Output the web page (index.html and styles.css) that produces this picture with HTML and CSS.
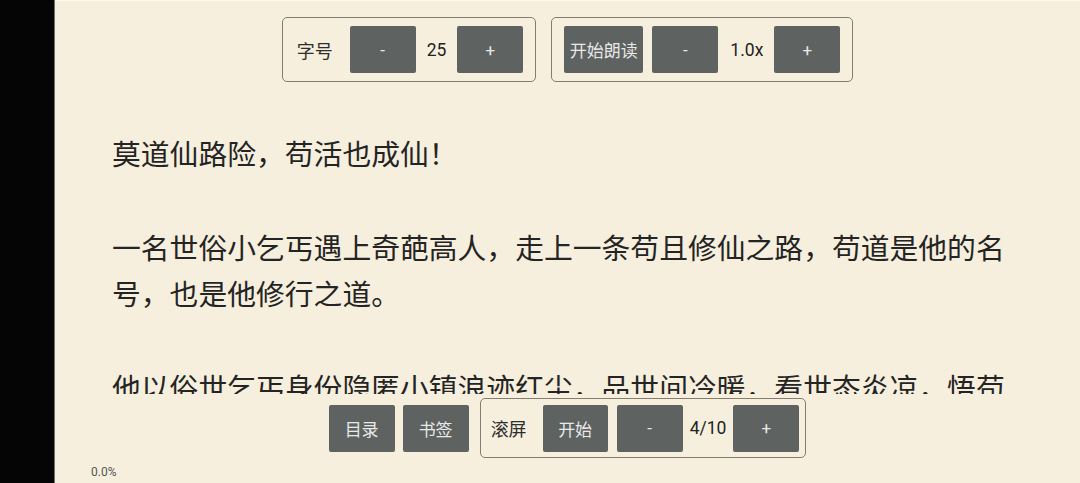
FILE: index.html
```html
<!DOCTYPE html>
<html>
<head>
  <meta charset="UTF-8">
  <title>阅读</title>
  <link rel="stylesheet" href="styles.css">
</head>
<body>
  <div class="screen">
    <div class="bezel"></div>
    <main class="reader">
      <div class="toolbar">
        <div class="panel">
          <span class="label">字号</span>
          <button class="btn">-</button>
          <span class="value">25</span>
          <button class="btn">+</button>
        </div>
        <div class="panel">
          <button class="btn btn-wide">开始朗读</button>
          <button class="btn">-</button>
          <span class="value value-wide">1.0x</span>
          <button class="btn">+</button>
        </div>
      </div>

      <article class="page">
        <p>莫道仙路险，苟活也成仙！</p>
        <p>一名世俗小乞丐遇上奇葩高人，走上一条苟且修仙之路，苟道是他的名号，也是他修行之道。</p>
        <p>他以俗世乞丐身份隐匿小镇浪迹红尘，品世间冷暖，看世态炎凉，悟苟</p>
      </article>

      <div class="controls">
        <button class="btn">目录</button>
        <button class="btn btn-gap">书签</button>
        <div class="panel panel-compact">
          <span class="label">滚屏</span>
          <button class="btn btn-start">开始</button>
          <button class="btn">-</button>
          <span class="value">4/10</span>
          <button class="btn">+</button>
        </div>
      </div>

      <div class="progress">0.0%</div>
    </main>
  </div>
</body>
</html>
```

FILE: styles.css
```css
* { box-sizing: border-box; }
html, body { margin: 0; height: 100%; }
body { background: #000; font-family: Roboto, "Noto Sans CJK SC", sans-serif; overflow: hidden; }

.screen { display: flex; height: 483px; }
.bezel { width: 55px; background: #050505; border-right: 1px solid #6e6e6e; }
.reader { flex: 1; background: #f6efdd; border-top: 1px solid #fdfaf2; display: flex; flex-direction: column; }

/* top and bottom control strips */
.toolbar { display: flex; justify-content: center; gap: 15px; padding-top: 16px; }
.controls { display: flex; justify-content: center; align-items: center; margin-top: 4px; }

.panel { display: flex; align-items: center; border: 1px solid #857e70; border-radius: 5px; padding: 8px 12px; }
.panel-compact { padding: 5.5px 6px; }

.label { font-family: "Noto Sans CJK SC", sans-serif; font-size: 18px; color: #2e2e2e; padding: 0 17px 0 2px; }
.panel-compact .label { padding: 0 16px 0 4px; }
.value { font-size: 17.5px; color: #222; padding: 0 11px; }
.value-wide { padding: 0 11px 0 12px; }
.panel-compact .value { padding: 0 7px; }

.btn { height: 47px; min-width: 66px; padding: 0 4px; border: none; border-radius: 2px; background: #5e6261; color: #e8e8e8; font-family: Roboto, "Noto Sans CJK SC", sans-serif; font-size: 17px; }
.btn-wide { margin-right: 9px; min-width: 79px; }
.btn-start { margin-right: 9px; min-width: 65px; }
.controls > .btn { margin-right: 8px; }
.controls > .btn-gap { margin-right: 11px; }

/* reading page */
.page { height: 312px; overflow: hidden; padding: 48px 57px 0; font-family: "Noto Sans CJK SC", sans-serif; font-size: 28.8px; line-height: 46.8px; color: #242424; }
.page p { margin: 0 0 46.8px; }

.progress { font-size: 12px; color: #555; padding-left: 36px; margin-top: 7px; }
```
